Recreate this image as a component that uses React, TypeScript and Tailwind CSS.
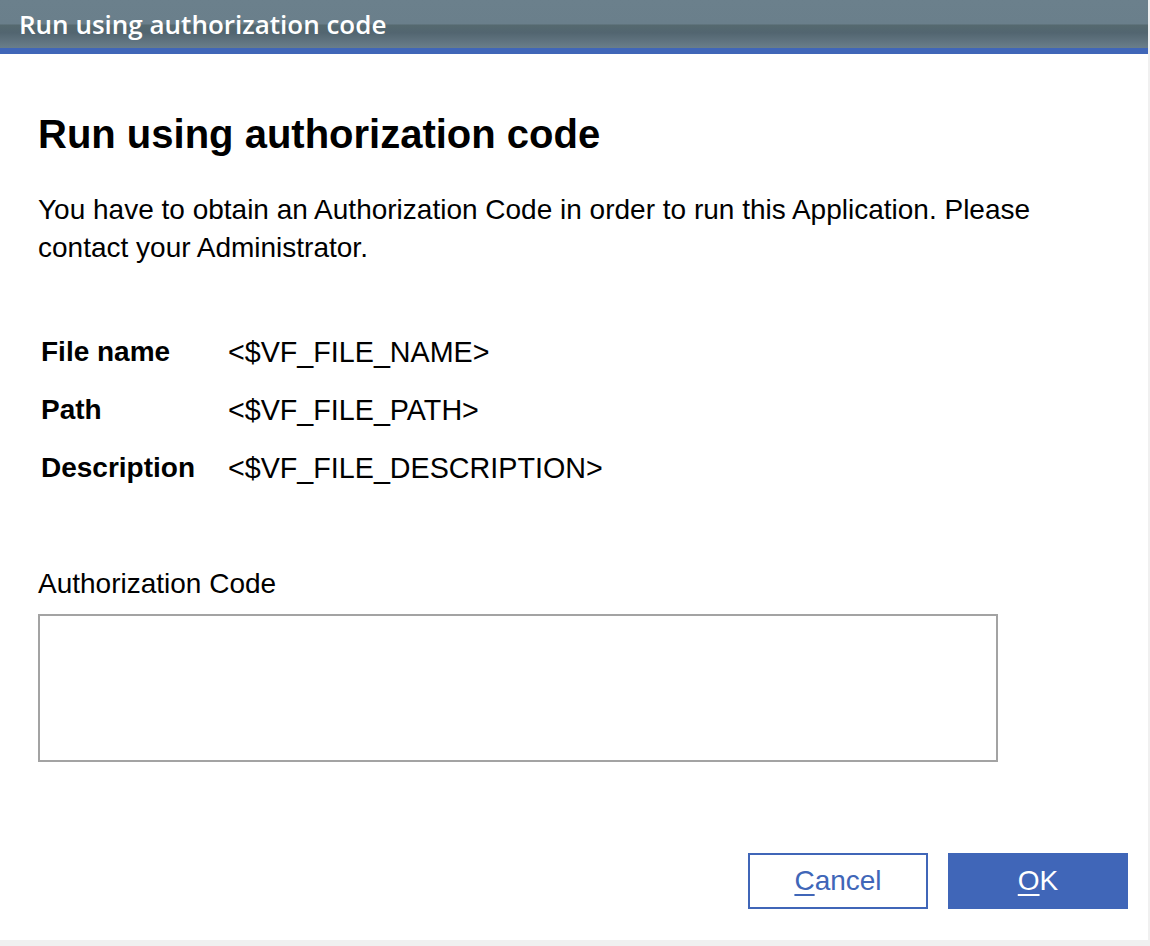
import React, { useState } from 'react';

const fileInfo = [
  { label: 'File name', value: '<$VF_FILE_NAME>' },
  { label: 'Path', value: '<$VF_FILE_PATH>' },
  { label: 'Description', value: '<$VF_FILE_DESCRIPTION>' },
];

export default function App() {
  const [code, setCode] = useState('');

  return (
    <div className="w-[1150px] h-[946px] bg-[#f0f0f0] font-['Liberation_Sans',Arial,sans-serif] text-black">
      <div className="w-[1148px] h-[940px] bg-white flex flex-col">
        {/* Window title bar */}
        <div className="h-[54px] shrink-0 border-b-[6px] border-[#4066b8] bg-[linear-gradient(to_bottom,#6b808c_0%,#6a7f8b_50%,#55696f_52%,#526570_68%,#6a7e8a_100%)] flex items-center pl-[19px]">
          <span className="font-['Open_Sans',sans-serif] font-semibold text-[26px] leading-[30px] text-white">
            Run using authorization code
          </span>
        </div>

        <div className="flex flex-col flex-1 pl-[38px] pr-[20px]">
          <h1 className="mt-[57px] text-[40px] leading-[46px] font-bold">Run using authorization code</h1>

          <p className="mt-[34px] text-[28px] leading-[38px] w-[1010px]">
            You have to obtain an Authorization Code in order to run this Application. Please contact your
            Administrator.
          </p>

          <div className="mt-[56px] ml-[3px] flex flex-col">
            {fileInfo.map((row) => (
              <div key={row.label} className="flex h-[58px] overflow-hidden">
                <span className="w-[187px] text-[28px] leading-[58px] font-bold">{row.label}</span>
                <span className="text-[28.7px] leading-[58px]">{row.value}</span>
              </div>
            ))}
          </div>

          <label className="mt-[70px] text-[28px] leading-[34px]">Authorization Code</label>
          <textarea
            value={code}
            onChange={(e) => setCode(e.target.value)}
            className="mt-[13px] w-[960px] h-[148px] border-2 border-[#a3a3a3] resize-none outline-none px-2 text-[24px]"
          />

          <div className="mt-[91px] flex justify-end gap-[20px]">
            <button className="w-[180px] h-[56px] border-2 border-[#4066b8] text-[#4066b8] text-[28px] leading-none flex items-center justify-center">
              <span>
                <span className="underline underline-offset-[4px] decoration-2">C</span>ancel
              </span>
            </button>
            <button className="w-[180px] h-[56px] bg-[#4066b8] text-white text-[28px] leading-none flex items-center justify-center">
              <span>
                <span className="underline underline-offset-[4px] decoration-2">O</span>K
              </span>
            </button>
          </div>
        </div>
      </div>
    </div>
  );
}
